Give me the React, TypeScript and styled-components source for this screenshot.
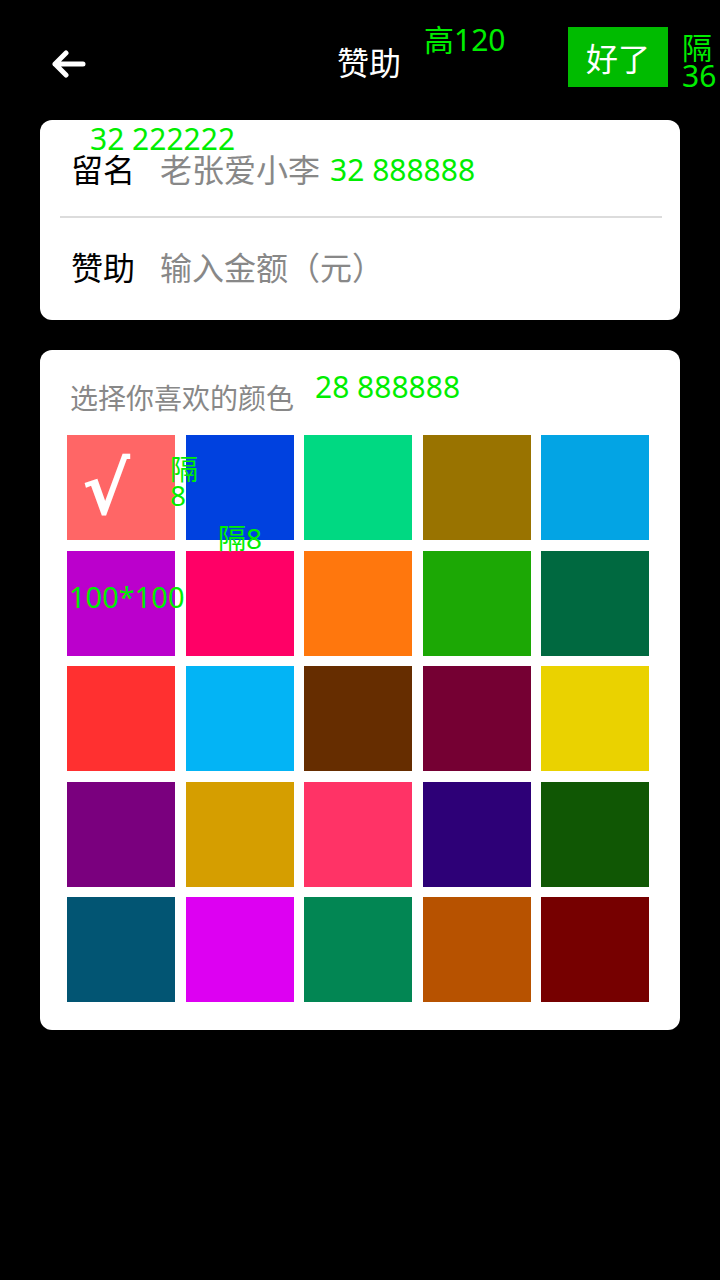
import React from "react";
import styled, { createGlobalStyle } from "styled-components";

const GlobalStyle = createGlobalStyle`
  html, body {
    margin: 0;
    padding: 0;
    background: #000;
  }
  body {
    font-family: "Noto Sans", "Noto Sans CJK SC", sans-serif;
  }
  * { box-sizing: border-box; }
`;

const Page = styled.div`
  width: 720px;
  min-height: 1280px;
  background: #000;
  display: flex;
  flex-direction: column;
`;

const Header = styled.header`
  position: relative;
  height: 120px;
  display: flex;
  align-items: flex-start;
`;

const BackButton = styled.div`
  width: 170px;
  padding-left: 52px;
  padding-top: 50px;
  display: flex;
`;

const Title = styled.div`
  flex: 1;
  text-align: center;
  color: #fff;
  font-family: "Noto Sans CJK SC", sans-serif;
  font-size: 32px;
  line-height: 34px;
  margin-top: 44px;
`;

const DoneButton = styled.div`
  width: 100px;
  height: 60px;
  margin-top: 27px;
  background: #00bb00;
  color: #fff;
  font-family: "Noto Sans CJK SC", sans-serif;
  font-size: 32px;
  display: flex;
  align-items: center;
  justify-content: center;
`;

const Note = styled.div<{ $size?: number }>`
  color: #00ee00;
  font-family: "Noto Sans", "Noto Sans CJK SC", sans-serif;
  font-size: ${(p) => p.$size ?? 30}px;
  line-height: ${(p) => (p.$size ?? 30) - 2}px;
  white-space: nowrap;
`;

const SideNote = styled(Note)`
  width: 38px;
  margin-left: 14px;
  margin-top: 34px;
  text-align: left;
`;

const OverNote = styled(Note)<{ $x: number; $y: number }>`
  position: absolute;
  left: ${(p) => p.$x}px;
  top: ${(p) => p.$y}px;
  z-index: 2;
`;

const Card = styled.section`
  position: relative;
  margin: 0 40px;
  background: #fff;
  border-radius: 12px;
`;

const FormCard = styled(Card)`
  padding-bottom: 6px;
`;

const Row = styled.div`
  height: 96px;
  display: flex;
  align-items: center;
  padding-left: 31px;
  font-family: "Noto Sans CJK SC", sans-serif;
  font-size: 32px;
`;

const Label = styled.span`
  color: #000;
  width: 64px;
`;

const Placeholder = styled.span`
  color: #888;
  margin-left: 25px;
`;

const InlineNote = styled(Note)`
  margin-left: 10px;
  margin-top: 3px;
`;

const Divider = styled.div`
  height: 2px;
  background: #dcdcdc;
  margin: 0 18px 0 20px;
`;

const ColorCard = styled(Card)`
  margin-top: 30px;
  padding: 31px 31px 28px 27px;
`;

const SectionTitle = styled.div`
  color: #888;
  font-family: "Noto Sans CJK SC", sans-serif;
  font-size: 28px;
  line-height: 32px;
  padding-left: 3px;
  margin-bottom: 22px;
`;

const Grid = styled.div`
  position: relative;
  display: grid;
  grid-template-columns: repeat(5, 1fr);
  column-gap: 10.5px;
  row-gap: 10.5px;
  grid-auto-rows: 105px;
`;

const Swatch = styled.div<{ $color: string }>`
  background: ${(p) => p.$color};
  display: flex;
  align-items: center;
  justify-content: center;
  color: #fff;
`;

const Check = styled.span`
  font-family: "DejaVu Sans", sans-serif;
  font-weight: bold;
  font-size: 72px;
  line-height: 1;
  margin-right: 30px;
  margin-top: 2px;
`;

const colors = [
  "#ff6666", "#0041df", "#00d982", "#997300", "#03a4e4",
  "#bb00cc", "#ff0066", "#ff770d", "#1ca805", "#006940",
  "#ff3030", "#03b4f5", "#662d00", "#750033", "#ead200",
  "#7a007e", "#d59e00", "#ff3366", "#2d0077", "#105704",
  "#025573", "#dd00f2", "#028653", "#b75200", "#760000",
];

export default function App() {
  return (
    <Page>
      <GlobalStyle />
      <Header>
        <BackButton>
          <svg width="34" height="28" viewBox="0 0 34 28" fill="none">
            <path
              d="M14 3 L3 14 L14 25 M3 14 L31 14"
              stroke="#fff"
              strokeWidth="5"
              strokeLinecap="round"
              strokeLinejoin="round"
            />
          </svg>
        </BackButton>
        <Title>赞助</Title>
        <DoneButton>好了</DoneButton>
        <SideNote>
          隔<br />36
        </SideNote>
        <OverNote $x={424} $y={26}>高120</OverNote>
      </Header>

      <FormCard>
        <OverNote $x={50} $y={5}>32 222222</OverNote>
        <Row>
          <Label>留名</Label>
          <Placeholder>老张爱小李</Placeholder>
          <InlineNote>32 888888</InlineNote>
        </Row>
        <Divider />
        <Row>
          <Label>赞助</Label>
          <Placeholder>输入金额（元）</Placeholder>
        </Row>
      </FormCard>

      <ColorCard>
        <OverNote $x={275} $y={23}>28 888888</OverNote>
        <SectionTitle>选择你喜欢的颜色</SectionTitle>
        <Grid>
          {colors.map((c, i) => (
            <Swatch key={c + i} $color={c}>
              {i === 0 && <Check>√</Check>}
            </Swatch>
          ))}
          <OverNote $x={103} $y={21} $size={28}>
            隔<br />8
          </OverNote>
          <OverNote $x={151} $y={90} $size={28}>隔8</OverNote>
          <OverNote $x={2} $y={148} $size={29}>100*100</OverNote>
        </Grid>
      </ColorCard>
    </Page>
  );
}
